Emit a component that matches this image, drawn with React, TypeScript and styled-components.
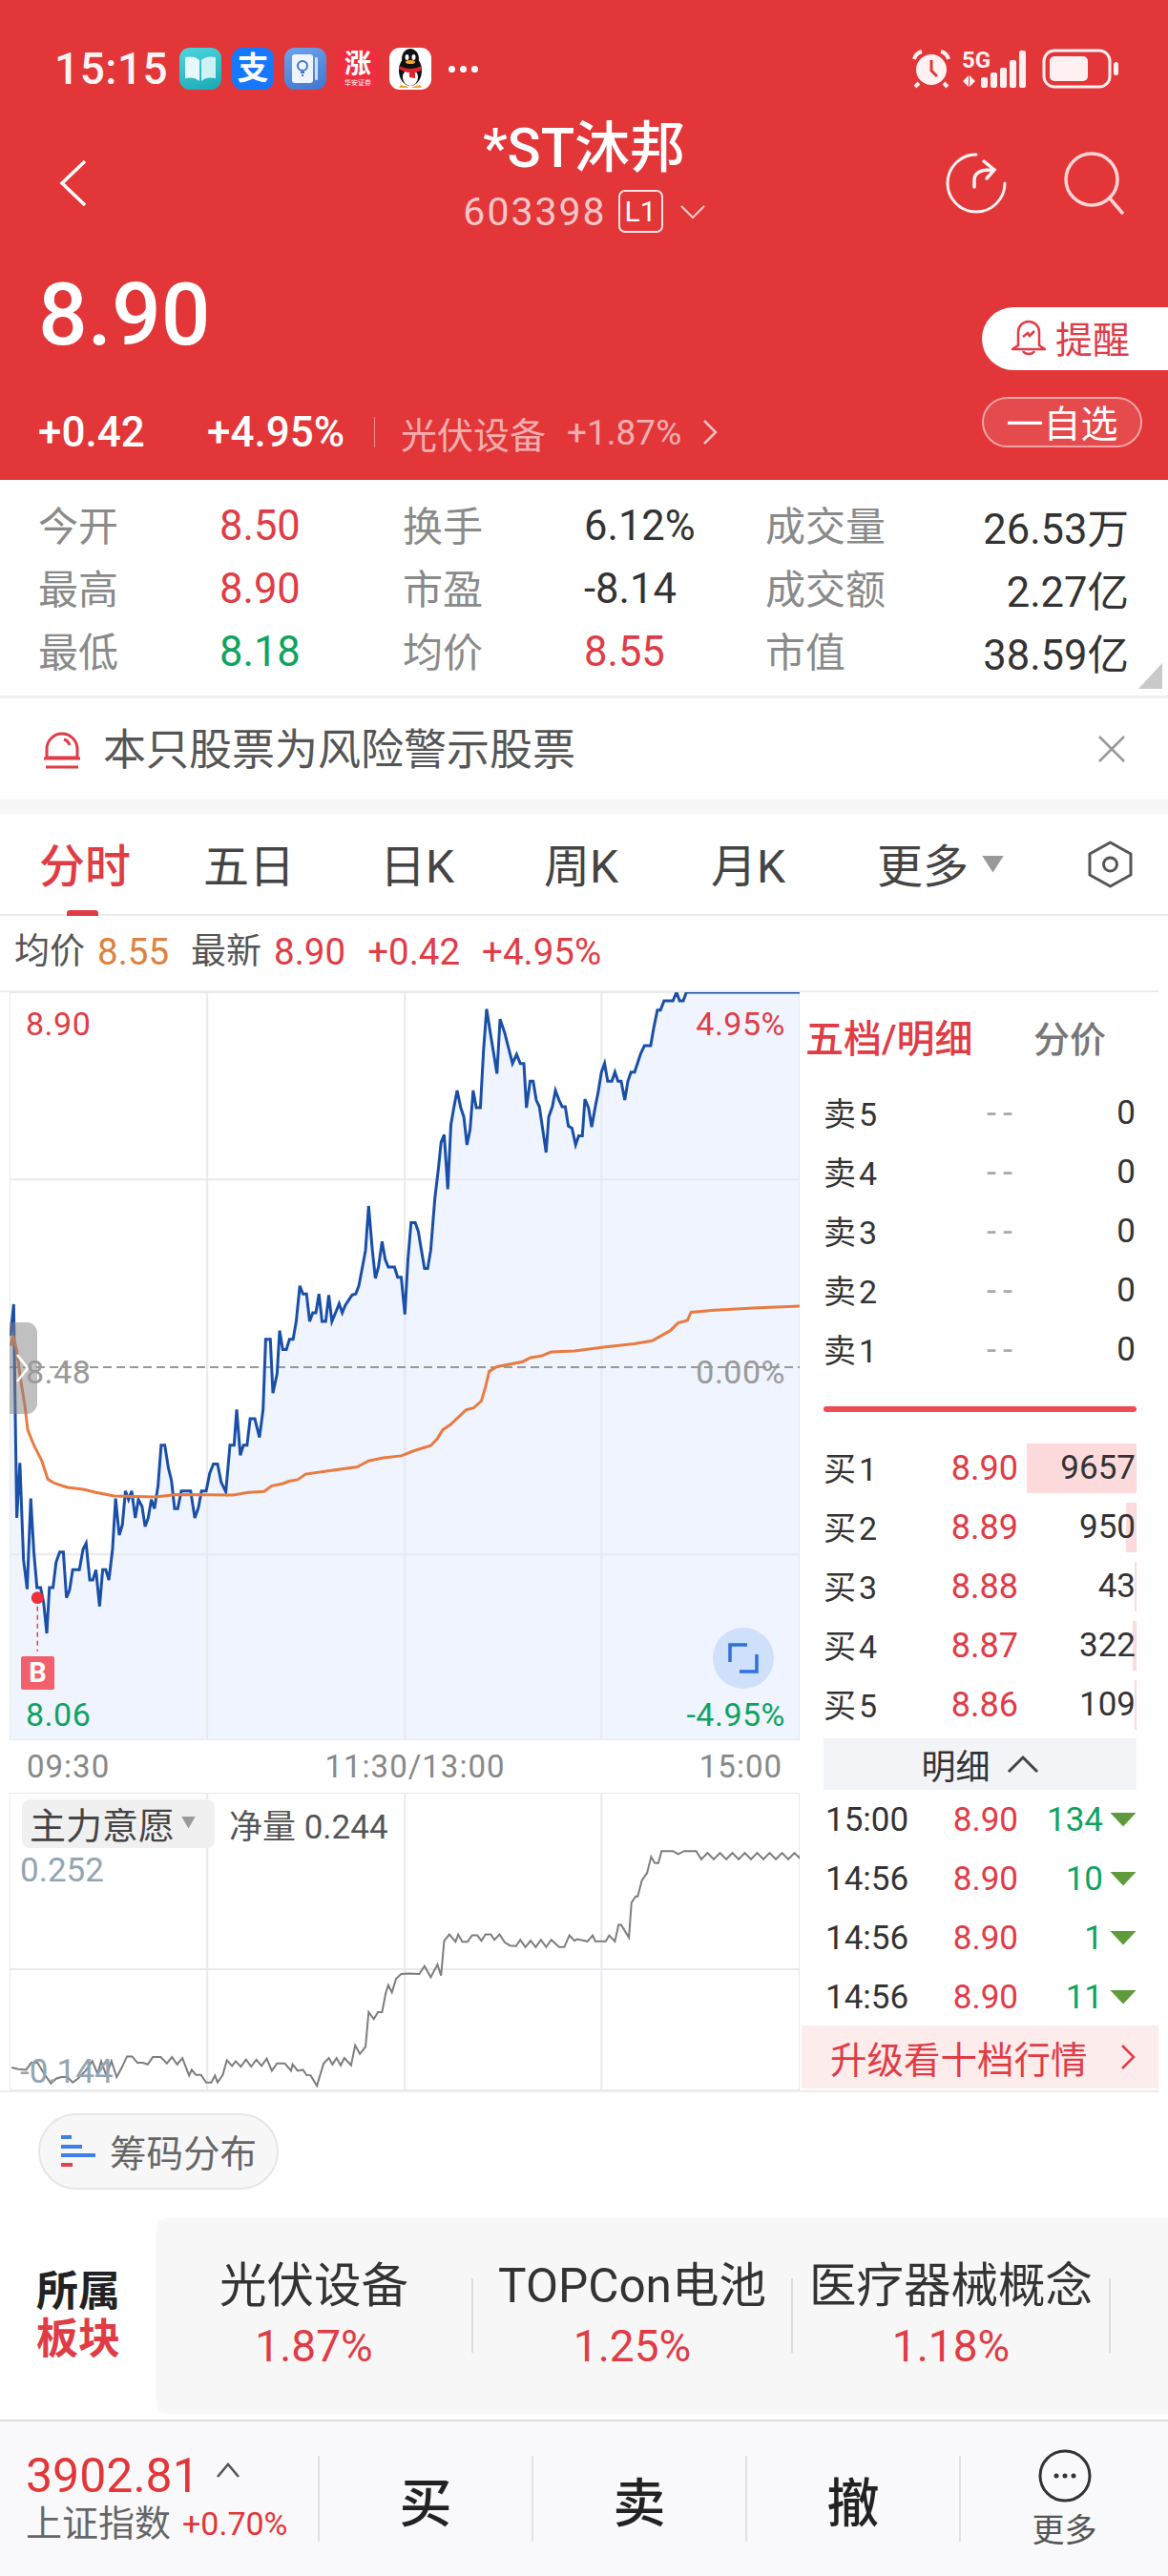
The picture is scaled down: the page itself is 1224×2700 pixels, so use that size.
import React from 'react'
import styled, { createGlobalStyle } from 'styled-components'

const RED = '#e23639'
const TEXT_RED = '#e03c46'
const GREEN = '#0ea35f'
const GRID = '#e9e9ee'

const GlobalStyle = createGlobalStyle`
    html, body { margin: 0; padding: 0; background: #fff; }
    * { box-sizing: border-box; }
    body { font-family: Roboto, "Noto Sans CJK SC", sans-serif; }
`

const Page = styled.div`
    width: 1224px;
    height: 2700px;
    overflow: hidden;
    background: #fff;
    color: #333;
`

const Header = styled.header`
    height: 503px;
    background: ${RED};
    color: #fff;
`

const StatusBar = styled.div`
    height: 94px;
    padding: 50px 50px 0 57px;
    display: flex;
    align-items: center;
`

const Clock = styled.span`
    font-size: 46px;
    font-weight: 500;
    letter-spacing: 0.5px;
    line-height: 44px;
    width: 131px;
    flex: none;
    color: #fff3f3;
`

const AppIcons = styled.div`
    display: flex;
    gap: 11px;
`

const AppTile = styled.div<{ $bg: string }>`
    width: 44px;
    height: 44px;
    border-radius: 11px;
    background: ${p => p.$bg};
    display: flex;
    flex-direction: column;
    align-items: center;
    justify-content: center;
    overflow: hidden;
    color: #fff;
`

const PayGlyph = styled.span`
    font-size: 33px;
    line-height: 36px;
    font-weight: 700;
`

const RiseGlyph = styled.span`
    font-size: 28px;
    line-height: 30px;
    font-weight: 700;
`

const RiseCaption = styled.span`
    font-size: 7px;
    line-height: 8px;
`

const MoreDots = styled.span`
    display: flex;
    gap: 5px;
    margin-left: 18px;

    i {
        width: 7px;
        height: 7px;
        border-radius: 50%;
        background: #fff;
    }
`

const StatusRight = styled.div`
    margin-left: auto;
    display: flex;
    align-items: center;
`

const NavRow = styled.div`
    margin-top: 34px;
    height: 116px;
    padding: 0 62px;
    display: grid;
    grid-template-columns: 1fr auto 1fr;
`

const BackCell = styled.div`
    display: flex;
    align-items: center;
    padding-top: 12px;
`

const TitleBlock = styled.div`
    display: flex;
    flex-direction: column;
    align-items: center;
`

const Title = styled.div`
    font-size: 58px;
    line-height: 54px;
    font-weight: 500;
`

const CodeRow = styled.div`
    margin-top: 17px;
    height: 45px;
    display: flex;
    align-items: center;
    color: rgba(255, 255, 255, 0.72);
    font-size: 41px;
    letter-spacing: 2px;
`

const LevelBadge = styled.span`
    margin-left: 12px;
    width: 47px;
    height: 45px;
    border: 2px solid rgba(255, 255, 255, 0.85);
    border-radius: 7px;
    font-size: 30px;
    letter-spacing: 0;
    color: #fff;
    display: flex;
    align-items: center;
    justify-content: center;
`

const NavActions = styled.div`
    display: flex;
    justify-content: flex-end;
    align-items: center;
    gap: 60px;
    padding-top: 12px;
    margin-right: -17px;
`

const Quote = styled.div`
    height: 259px;
    display: flex;
    justify-content: space-between;
`

const QuoteLeft = styled.div`
    padding-left: 40px;
`

const Price = styled.div`
    margin-top: 38px;
    font-size: 91px;
    line-height: 96px;
    font-weight: 500;
`

const ChangeRow = styled.div`
    margin-top: 55px;
    height: 40px;
    display: flex;
    align-items: center;
    font-size: 44px;
    white-space: nowrap;
`

const ChangeValue = styled.span<{ $width: number }>`
    width: ${p => p.$width}px;
    font-weight: 500;
`

const SectorLink = styled.span`
    border-left: 1px solid rgba(255, 255, 255, 0.45);
    height: 32px;
    padding-left: 27px;
    display: flex;
    align-items: center;
    gap: 22px;
    color: rgba(255, 255, 255, 0.62);
    font-size: 38px;
`

const SectorPct = styled.span`
    font-size: 37px;
`

const QuoteRight = styled.div`
    display: flex;
    flex-direction: column;
    align-items: flex-end;
`

const RemindButton = styled.div`
    margin-top: 78px;
    width: 195px;
    height: 66px;
    border-radius: 33px 0 0 33px;
    background: #fff;
    color: ${TEXT_RED};
    font-size: 39px;
    display: flex;
    align-items: center;
    padding: 0 0 4px 30px;
    gap: 9px;
`

const WatchButton = styled.div`
    margin-top: 28px;
    margin-right: 27px;
    width: 168px;
    height: 53px;
    border-radius: 27px;
    border: 2px solid rgba(255, 255, 255, 0.5);
    background: rgba(255, 255, 255, 0.1);
    font-size: 39px;
    padding-bottom: 3px;
    display: flex;
    align-items: center;
    justify-content: center;
`

const Stats = styled.section`
    position: relative;
    height: 229px;
    padding: 15px 40px 0;
    border-bottom: 3px solid #f0f0f0;
    display: grid;
    grid-template-columns: 190px 192px 190px 190px 200px 181px;
    grid-auto-rows: 66px;
    align-items: center;
    font-size: 43.5px;
`

const StatLabel = styled.span`
    color: #8a8a8a;
    font-size: 42px;
    margin-top: -5px;
`

const StatValue = styled.span<{ $color?: string; $end?: boolean }>`
    color: ${p => p.$color || '#333'};
    justify-self: ${p => (p.$end ? 'end' : 'start')};
    white-space: nowrap;
`

const CornerMark = styled.i`
    position: absolute;
    right: 6px;
    bottom: 7px;
    width: 25px;
    height: 27px;
    background: #c9c9c9;
    clip-path: polygon(100% 0, 100% 100%, 0 100%);
`

const WarningBar = styled.section`
    height: 106px;
    padding: 0 44px 0 45px;
    display: flex;
    align-items: center;
    color: #555;
    font-size: 45px;
`

const WarningText = styled.span`
    margin: -6px 0 0 23px;
    flex: 1;
`

const SectionGap = styled.div`
    height: 15px;
    background: #f6f6f6;
`

const Tabs = styled.nav`
    height: 107px;
    padding: 0 37px 4px 41px;
    border-bottom: 2px solid #ececec;
    display: flex;
    align-items: center;
    position: relative;
    font-size: 48px;
    color: #444;
`

const Tab = styled.span<{ $active?: boolean; $width: number }>`
    width: ${p => p.$width}px;
    color: ${p => (p.$active ? TEXT_RED : '#444')};
    font-weight: ${p => (p.$active ? 500 : 400)};
    flex: none;
`

const ActiveMark = styled.i`
    position: absolute;
    left: 70px;
    bottom: -2px;
    width: 33px;
    height: 6px;
    border-radius: 3px 3px 0 0;
    background: ${TEXT_RED};
`

const MoreArrow = styled.i`
    width: 23px;
    height: 18px;
    margin: 4px 0 0 14px;
    background: #999;
    clip-path: polygon(0 0, 100% 0, 50% 100%);
`

const TabSettings = styled.span`
    margin: 4px 0 0 auto;
    display: flex;
`

const SummaryLine = styled.div`
    height: 78px;
    padding: 0 0 2px 15px;
    display: flex;
    align-items: center;
    gap: 23px;
    font-size: 38.5px;
    line-height: 44px;
`

const SummaryGroup = styled.span`
    display: flex;
    align-items: center;
    gap: 13px;
    color: #555;
    font-size: 37px;
`

const SummaryValue = styled.span<{ $color: string }>`
    color: ${p => p.$color};
    font-size: 38.5px;
`

const Main = styled.section`
    width: 1214px;
    height: 1155px;
    border-top: 2px solid #ececec;
    border-bottom: 2px solid #ececec;
    display: grid;
    grid-template-columns: 840px 374px;
`

const ChartColumn = styled.div`
    padding-left: 10px;
`

const PriceChart = styled.div`
    position: relative;
    width: 828px;
    height: 784px;

    > svg {
        display: block;
        width: 100%;
        height: 100%;
    }
`

const ChartLabel = styled.span<{ $top: number; $right?: boolean; $color: string }>`
    position: absolute;
    top: ${p => p.$top}px;
    ${p => (p.$right ? 'right: 15px;' : 'left: 17px;')}
    color: ${p => p.$color};
    font-size: 34px;
    line-height: 40px;
    letter-spacing: 0.5px;
`

const SlideHandle = styled.div`
    position: absolute;
    left: 0;
    top: 346px;
    width: 29px;
    height: 96px;
    border-radius: 0 11px 11px 0;
    background: rgba(130, 130, 130, 0.5);
    display: flex;
    align-items: center;
`

const TradeBadge = styled.span`
    position: absolute;
    left: 12px;
    top: 696px;
    width: 35px;
    height: 35px;
    background: #f2606b;
    border-radius: 2px;
    color: #fff;
    font-size: 29px;
    font-weight: 700;
    text-align: center;
    line-height: 35px;
`

const ExpandButton = styled.span`
    position: absolute;
    left: 737px;
    top: 666px;
    width: 64px;
    height: 64px;
    border-radius: 50%;
    background: #cfe0fa;
    display: flex;
    align-items: center;
    justify-content: center;
`

const TimeAxis = styled.div`
    height: 55px;
    padding: 0 18px;
    display: flex;
    justify-content: space-between;
    align-items: center;
    width: 828px;
    color: #888;
    font-size: 33px;
    letter-spacing: 1px;
`

const TimeMiddle = styled.span`
    margin-left: 22px;
`

const SubChart = styled.div`
    position: relative;
    width: 828px;
    height: 312px;

    > svg {
        display: block;
        width: 100%;
        height: 100%;
    }
`

const SubHeader = styled.div`
    position: absolute;
    left: 13px;
    top: 7px;
    display: flex;
    align-items: center;
    gap: 15px;
    color: #555;
    font-size: 35px;
`

const IndicatorPicker = styled.span`
    width: 202px;
    height: 51px;
    padding: 0 0 3px 8px;
    background: #f0f0f0;
    border-radius: 8px;
    display: flex;
    align-items: center;
    gap: 7px;
    font-size: 38px;
    color: #444;
    white-space: nowrap;
`

const PickerArrow = styled.i`
    width: 15px;
    height: 13px;
    background: #999;
    clip-path: polygon(0 0, 100% 0, 50% 100%);
`

const SubLabel = styled.span<{ $top: number }>`
    position: absolute;
    left: 11px;
    top: ${p => p.$top}px;
    color: #92a5b3;
    font-size: 35px;
    line-height: 40px;
`

const BookColumn = styled.aside`
    display: flex;
    flex-direction: column;
`

const BookTabs = styled.div`
    height: 96px;
    padding: 0 0 4px 4px;
    display: flex;
    align-items: center;
    font-size: 40px;
    font-weight: 500;
`

const BookTabActive = styled.span`
    color: ${TEXT_RED};
    width: 239px;
`

const BookTabIdle = styled.span`
    color: #777;
    font-size: 38px;
`

const BookRow = styled.div`
    height: 62px;
    margin: 0 23px 0 23px;
    display: grid;
    grid-template-columns: 132px 73px 1fr;
    align-items: center;
    font-size: 35px;
`

const SideLabel = styled.span`
    letter-spacing: 3px;
    color: #333;
    white-space: nowrap;
    font-size: 34px;
    margin-top: -3px;
`

const BookPrice = styled.span<{ $idle?: boolean }>`
    color: ${p => (p.$idle ? '#aaa' : TEXT_RED)};
    text-align: right;
    font-size: 36px;
    padding-right: ${p => (p.$idle ? 0 : 1)}px;
    letter-spacing: ${p => (p.$idle ? 7 : 0)}px;
`

const QtyCell = styled.span`
    position: relative;
    height: 52px;
    line-height: 52px;
    text-align: right;
    padding-right: 1px;
`

const QtyBar = styled.i`
    position: absolute;
    right: 0;
    top: 0;
    height: 100%;
    background: #fddadc;
`

const QtyText = styled.span`
    position: relative;
`

const BookDivider = styled.div`
    height: 62px;
    margin: 0 23px;
    display: flex;
    align-items: center;

    &::before {
        content: '';
        width: 100%;
        height: 6px;
        border-radius: 3px;
        background: #ee4b52;
    }
`

const DetailHeader = styled.div`
    margin: 4px 23px 0;
    height: 54px;
    background: #f3f4f8;
    display: flex;
    align-items: center;
    justify-content: center;
    gap: 17px;
    font-size: 36px;
    color: #333;
`

const TradeRow = styled.div`
    height: 62px;
    margin: 0 23px 0 25px;
    display: grid;
    grid-template-columns: 132px 70px 1fr 28px;
    align-items: center;
    font-size: 35px;
`

const TradePrice = styled.span`
    color: ${TEXT_RED};
    text-align: right;
`

const TradeQty = styled.span`
    color: ${GREEN};
    text-align: right;
    padding-right: 7px;
`

const TradeArrow = styled.i`
    width: 28px;
    height: 15px;
    background: #5d9b3b;
    clip-path: polygon(0 0, 100% 0, 50% 100%);
`

const UpgradeBar = styled.div`
    height: 66px;
    margin-top: -1px;
    padding: 0 23px 0 30px;
    background: #fdecec;
    color: ${TEXT_RED};
    font-size: 38.5px;
    display: flex;
    align-items: center;
    justify-content: space-between;
`

const ChipRow = styled.div`
    padding: 22px 0 30px 40px;
`

const Chip = styled.div`
    width: 252px;
    height: 80px;
    border: 2px solid #e6e6e6;
    border-radius: 40px;
    background: #f7f7f7;
    color: #666;
    font-size: 38.5px;
    display: flex;
    align-items: center;
    gap: 15px;
    padding: 0 0 3px 21px;
`

const SectorRow = styled.section`
    height: 205px;
    display: flex;
`

const SectorHeading = styled.div`
    width: 164px;
    padding: 52px 0 0 38px;
    font-size: 44px;
    line-height: 50px;
    font-weight: 700;
    color: #222;
`

const SectorHeadingAccent = styled.div`
    color: ${TEXT_RED};
`

const SectorPanel = styled.div`
    flex: 1;
    background: #f7f7f8;
    border-radius: 12px 0 0 12px;
    padding-top: 44px;
    display: grid;
    grid-template-columns: 332px 335px 333px;
    grid-auto-rows: 92px;
`

const SectorCell = styled.div`
    border-right: 2px solid #ddd;
    height: 78px;
    margin-top: 19px;
    display: flex;
    flex-direction: column;
    align-items: center;
    justify-content: center;
    white-space: nowrap;
`

const SectorName = styled.div`
    flex: none;
    font-size: 49.5px;
    line-height: 48px;
    color: #333;
`

const SectorGain = styled.div`
    flex: none;
    font-size: 46px;
    line-height: 46px;
    margin-top: 16px;
    color: ${TEXT_RED};
`

const BottomBar = styled.footer`
    margin-top: 6px;
    height: 164px;
    border-top: 2px solid #ddd;
    background: #f9f9fb;
    padding-top: 36px;
    display: grid;
    grid-template-columns: 333px 224px 224px 224px 219px;
    grid-auto-rows: 90px;
`

const IndexCell = styled.div`
    padding-left: 27px;
    margin-top: -4px;
`

const IndexValue = styled.div`
    display: flex;
    align-items: flex-start;
    gap: 17px;
    font-size: 50px;
    line-height: 50px;
    color: ${RED};
`

const IndexMeta = styled.div`
    margin-top: 2px;
    display: flex;
    align-items: center;
    gap: 12px;
    font-size: 38px;
    line-height: 46px;
    color: #666;
    white-space: nowrap;
`

const IndexGain = styled.span`
    font-size: 34px;
    color: ${RED};
`

const ActionCell = styled.div`
    border-left: 2px solid #e2e2e2;
    display: flex;
    flex-direction: column;
    align-items: center;
    justify-content: center;
    font-size: 55px;
    font-weight: 500;
    color: #222;

    svg {
        flex: none;
    }
`

const MoreCaption = styled.span`
    margin-top: 10px;
    flex: none;
    font-size: 34px;
    line-height: 38px;
    font-weight: 400;
    color: #555;
`

const bluePoints = '20,690 26,628 32,1048 38,940 45,1130 52,1188 59,1010 65,1115 71,1185 78,1185 84,1215 90,1275 95,1185 102,1185 108,1135 115,1115 122,1115 128,1205 134,1190 140,1150 153,1150 160,1110 166,1098 173,1170 179,1170 185,1150 192,1222 198,1150 204,1150 210,1170 217,1110 223,1010 230,1082 236,1062 242,995 248,1012 254,995 261,1048 267,1012 274,1025 280,1065 286,1048 292,1012 298,1030 305,985 311,905 318,905 325,950 331,975 337,1030 343,1030 350,995 368,995 376,1048 383,1028 389,995 398,995 405,960 412,942 420,942 427,978 436,997 444,905 452,905 457,835 464,925 470,905 477,905 483,853 492,853 501,890 508,835 513,697 522,697 527,803 535,765 540,680 546,717 553,717 559,697 566,697 572,662 579,592 585,608 592,608 598,662 604,645 610,645 616,608 622,662 629,662 635,610 641,662 648,645 655,627 661,645 667,630 680,610 687,608 693,592 700,555 706,522 712,435 719,520 725,577 731,555 738,505 744,540 750,555 762,555 768,575 775,575 782,648 788,540 794,468 802,468 808,485 814,522 820,558 826,558 832,522 840,420 847,360 852,310 858,295 865,402 871,275 877,240 883,208 890,242 896,260 902,315 908,285 914,208 920,242 928,242 934,130 940,48 948,100 960,175 966,68 975,95 990,155 998,137 1005,155 1012,155 1017,242 1024,190 1030,190 1036,227 1042,240 1055,330 1060,260 1067,240 1073,208 1080,227 1086,240 1092,240 1098,278 1105,282 1112,315 1118,297 1125,297 1130,225 1137,242 1143,280 1150,240 1155,215 1162,172 1168,155 1174,190 1182,190 1188,172 1194,190 1200,190 1207,227 1213,190 1219,172 1226,172 1238,135 1245,120 1257,120 1263,85 1270,50 1276,50 1283,32 1300,32 1307,15 1313,32 1320,32 1326,15 1545,15'

const orangePoints = '20,710 25,690 32,720 40,780 48,830 53,875 65,905 80,935 92,972 105,980 130,988 160,992 185,998 220,1005 300,1007 340,1002 450,1003 480,998 510,996 525,985 545,981 558,976 575,973 590,962 640,955 690,948 712,936 740,930 775,926 800,916 832,906 845,892 855,875 870,865 900,836 915,832 930,818 938,790 945,760 960,751 1010,741 1025,733 1045,730 1065,722 1110,720 1170,712 1225,706 1260,700 1295,680 1310,665 1328,660 1335,644 1380,640 1465,635 1545,632'

// tail of the indicator line just flickers between two levels
const subTail = Array.from({ length: 17 }, (_, i) => `${1355 + i * 12},${i % 2 ? 248 : 268}`).join(' ')

const subPoints = `22,925 35,930 50,932 60,910 72,910 85,945 98,975 108,960 118,955 130,955 140,972 150,960 165,935 178,905 188,945 195,905 205,950 215,905 225,955 235,925 245,890 255,890 265,910 275,910 285,915 295,892 310,892 322,912 332,892 342,915 352,895 365,950 370,932 378,948 388,948 398,972 408,972 415,950 420,972 430,948 438,902 448,920 455,905 465,922 475,900 485,922 495,900 505,920 515,897 525,935 535,912 550,912 562,935 565,915 575,935 585,932 592,948 600,950 612,983 625,912 635,895 642,915 650,895 658,918 665,895 678,918 686,855 695,882 706,860 712,750 722,772 730,750 738,750 745,690 750,665 757,688 765,645 775,630 790,628 810,630 820,605 832,640 845,600 852,635 858,525 868,505 880,528 885,505 893,528 903,528 912,508 922,508 930,525 938,505 948,505 955,522 965,505 975,530 985,540 997,542 1005,522 1015,545 1025,525 1035,545 1045,522 1055,545 1065,522 1080,545 1090,545 1100,508 1110,525 1115,520 1135,527 1145,508 1150,527 1170,527 1177,508 1188,527 1195,475 1200,475 1215,515 1220,405 1228,385 1232,385 1240,335 1250,312 1258,260 1265,280 1272,280 1278,242 1300,242 1310,252 1322,242 1345,242 ${subTail} 1545,255`

const stats = [
    ['今开', '8.50', TEXT_RED, '换手', '6.12%', '', '成交量', '26.53万'],
    ['最高', '8.90', TEXT_RED, '市盈', '-8.14', '', '成交额', '2.27亿'],
    ['最低', '8.18', GREEN, '均价', '8.55', TEXT_RED, '市值', '38.59亿'],
]

const asks = ['卖5', '卖4', '卖3', '卖2', '卖1']

const bids = [
    { label: '买1', price: '8.90', qty: '9657', bar: 115 },
    { label: '买2', price: '8.89', qty: '950', bar: 11 },
    { label: '买3', price: '8.88', qty: '43', bar: 2 },
    { label: '买4', price: '8.87', qty: '322', bar: 4 },
    { label: '买5', price: '8.86', qty: '109', bar: 2 },
]

const trades = [
    ['15:00', '8.90', '134'],
    ['14:56', '8.90', '10'],
    ['14:56', '8.90', '1'],
    ['14:56', '8.90', '11'],
]

const sectors = [
    ['光伏设备', '1.87%'],
    ['TOPCon电池', '1.25%'],
    ['医疗器械概念', '1.18%'],
]

const ChartLines = ({ top, bottom, hLines }: { top: number; bottom: number; hLines: number[] }) => (
    <>
        <rect x="18" y={top} width="1527" height={bottom - top} fill="none" stroke={GRID} strokeWidth="2" vectorEffect="non-scaling-stroke" />
        {[400, 782, 1162].map(x => (
            <line key={x} x1={x} x2={x} y1={top} y2={bottom} stroke={GRID} strokeWidth="2" vectorEffect="non-scaling-stroke" />
        ))}
        {hLines.map(y => (
            <line key={y} x1="18" x2="1545" y1={y} y2={y} stroke={GRID} strokeWidth="2" vectorEffect="non-scaling-stroke" />
        ))}
    </>
)

const App = () => {
    return (
        <Page>
            <GlobalStyle />
            <Header>
                <StatusBar>
                    <Clock>15:15</Clock>
                    <AppIcons>
                        <AppTile $bg="linear-gradient(160deg,#4fd6e0,#18a9b4)">
                            <svg width="34" height="30" viewBox="0 0 34 30">
                                <path d="M16 6C12 2 6 2 1 3v22c5-1 11-1 15 3z" fill="#e8f9fb" />
                                <path d="M18 6c4-4 10-4 15-3v22c-5-1-11-1-15 3z" fill="#cdf1f5" />
                            </svg>
                        </AppTile>
                        <AppTile $bg="#1677ff"><PayGlyph>支</PayGlyph></AppTile>
                        <AppTile $bg="linear-gradient(160deg,#6ea3ea,#3f76cf)">
                            <svg width="30" height="32" viewBox="0 0 30 32">
                                <rect x="1" y="1" width="22" height="30" rx="3" fill="#eef4fd" />
                                <rect x="25" y="4" width="3" height="24" rx="1" fill="#cfe0f8" />
                                <circle cx="12" cy="13" r="5" fill="none" stroke="#3f76cf" strokeWidth="2" />
                                <path d="M10 20h4M11 23h2" stroke="#3f76cf" strokeWidth="2" />
                            </svg>
                        </AppTile>
                        <AppTile $bg="#ee2e3f">
                            <RiseGlyph>涨</RiseGlyph>
                            <RiseCaption>华安证券</RiseCaption>
                        </AppTile>
                        <AppTile $bg="#fff">
                            <svg width="36" height="42" viewBox="0 0 36 42">
                                <ellipse cx="18" cy="23" rx="12" ry="16" fill="#111" />
                                <ellipse cx="18" cy="10" rx="9" ry="10" fill="#111" />
                                <ellipse cx="18" cy="30" rx="8" ry="9" fill="#fff" />
                                <ellipse cx="14.500" cy="9" rx="2" ry="3" fill="#fff" />
                                <ellipse cx="21.500" cy="9" rx="2" ry="3" fill="#fff" />
                                <ellipse cx="18" cy="14" rx="5" ry="2" fill="#f5a623" />
                                <path d="M6 18c8 4 16 4 24 0v4c-3 2-5 2-7 3v6l-6-1v-5c-4 0-8-2-11-4z" fill="#e0232e" />
                                <path d="M8 38l8 2v1H6zM28 38l-8 2v1h10z" fill="#f5a623" />
                            </svg>
                        </AppTile>
                    </AppIcons>
                    <MoreDots><i /><i /><i /></MoreDots>
                    <StatusRight>
                        <svg width="42" height="42" viewBox="0 0 42 42">
                            <circle cx="21" cy="22" r="16" fill="#fff1f1" />
                            <path d="M21 12v11l6 6" fill="none" stroke={RED} strokeWidth="3" />
                            <path d="M3 11c1-4 4-7 8-8M39 11c-1-4-4-7-8-8M8 36l-4 4M34 36l4 4" fill="none" stroke="#fff1f1" strokeWidth="4" />
                        </svg>
                        <svg width="82" height="44" viewBox="0 0 82 44" style={{ marginLeft: 11 }}>
                            <path d="M1 35l6-6v12zM8 29l6 6-6 6z" fill="#fff1f1" />
                            {[[20, 31], [30, 26], [40, 21], [50, 13], [60, 3]].map(([x, y]) => (
                                <rect key={x} x={x} y={y} width="7" height={42 - y} rx="2" fill="#fff1f1" />
                            ))}
                            <text x="0" y="21" fontFamily="Roboto" fontSize="24" fontWeight="700" fill="#fff1f1">5G</text>
                        </svg>
                        <svg width="82" height="42" viewBox="0 0 82 42" style={{ marginLeft: 2 }}>
                            <rect x="2" y="2" width="69" height="38" rx="11" fill="none" stroke="#fff1f1" strokeWidth="3" />
                            <rect x="8" y="8" width="40" height="26" rx="5" fill="#fff1f1" />
                            <rect x="75" y="14" width="5" height="14" rx="2.500" fill="#fff1f1" />
                        </svg>
                    </StatusRight>
                </StatusBar>

                <NavRow>
                    <BackCell>
                        <svg width="30" height="50" viewBox="0 0 30 50">
                            <path d="M27 2L3 25l24 23" fill="none" stroke="#fff" strokeWidth="3.500" />
                        </svg>
                    </BackCell>
                    <TitleBlock>
                        <Title>*ST沐邦</Title>
                        <CodeRow>
                            603398
                            <LevelBadge>L1</LevelBadge>
                            <svg width="26" height="16" viewBox="0 0 26 16" style={{ marginLeft: 18 }}>
                                <path d="M1 2l12 12L25 2" fill="none" stroke="rgba(255,255,255,.75)" strokeWidth="2" />
                            </svg>
                        </CodeRow>
                    </TitleBlock>
                    <NavActions>
                        <svg width="64" height="64" viewBox="0 0 64 64">
                            <path d="M32 2A30 30 0 1 0 62 32" fill="none" stroke="#fff2f2" strokeWidth="3" strokeLinecap="round" />
                            <path d="M30 36V29c0-7 5-11 17-11M40 9l11 9-8 9" fill="none" stroke="#fff2f2" strokeWidth="3.500" strokeLinecap="round" />
                        </svg>
                        <svg width="64" height="66" viewBox="0 0 64 66">
                            <circle cx="29" cy="29" r="27" fill="none" stroke="#ffd6d6" strokeWidth="3.500" />
                            <path d="M49 50l12 14" stroke="#ffd6d6" strokeWidth="3.500" strokeLinecap="round" />
                        </svg>
                    </NavActions>
                </NavRow>

                <Quote>
                    <QuoteLeft>
                        <Price>8.90</Price>
                        <ChangeRow>
                            <ChangeValue $width={177}>+0.42</ChangeValue>
                            <ChangeValue $width={175}>+4.95%</ChangeValue>
                            <SectorLink>
                                光伏设备
                                <SectorPct>+1.87%</SectorPct>
                                <svg width="17" height="28" viewBox="0 0 17 28">
                                    <path d="M2 2l12 12L2 26" fill="none" stroke="rgba(255,255,255,.7)" strokeWidth="2.500" />
                                </svg>
                            </SectorLink>
                        </ChangeRow>
                    </QuoteLeft>
                    <QuoteRight>
                        <RemindButton>
                            <svg width="38" height="40" viewBox="0 0 38 40">
                                <path d="M8 29V15a11 11 0 0 1 22 0v14l6 4H2z" fill="none" stroke={TEXT_RED} strokeWidth="2.500" strokeLinejoin="round" />
                                <path d="M13 20l5-4 2 3 5-5M13 35c2 4 10 4 12 0" fill="none" stroke={TEXT_RED} strokeWidth="2.500" />
                            </svg>
                            提醒
                        </RemindButton>
                        <WatchButton>一自选</WatchButton>
                    </QuoteRight>
                </Quote>
            </Header>

            <Stats>
                {stats.map(row => (
                    <React.Fragment key={row[0]}>
                        <StatLabel>{row[0]}</StatLabel>
                        <StatValue $color={row[2]}>{row[1]}</StatValue>
                        <StatLabel>{row[3]}</StatLabel>
                        <StatValue $color={row[5]}>{row[4]}</StatValue>
                        <StatLabel>{row[6]}</StatLabel>
                        <StatValue $end>{row[7]}</StatValue>
                    </React.Fragment>
                ))}
                <CornerMark />
            </Stats>

            <WarningBar>
                <svg width="40" height="42" viewBox="0 0 40 42">
                    <path d="M4 30V21a16 16 0 0 1 32 0v9z" fill="none" stroke={TEXT_RED} strokeWidth="3" />
                    <path d="M1 31h38M3 40h34M22 11c3 1 5 3 6 6" fill="none" stroke={TEXT_RED} strokeWidth="3" />
                </svg>
                <WarningText>本只股票为风险警示股票</WarningText>
                <svg width="30" height="30" viewBox="0 0 30 30">
                    <path d="M2 2l26 26M28 2L2 28" stroke="#999" strokeWidth="2.500" />
                </svg>
            </WarningBar>
            <SectionGap />

            <Tabs>
                <Tab $active $width={172}>分时</Tab>
                <Tab $width={185}>五日</Tab>
                <Tab $width={172}>日K</Tab>
                <Tab $width={175}>周K</Tab>
                <Tab $width={174}>月K</Tab>
                <Tab $width={96}>更多</Tab>
                <MoreArrow />
                <TabSettings>
                    <svg width="47" height="50" viewBox="0 0 47 50">
                        <path d="M23.500 2L45 14v22L23.500 48 2 36V14z" fill="none" stroke="#555" strokeWidth="3" strokeLinejoin="round" />
                        <circle cx="23.500" cy="25" r="7" fill="none" stroke="#555" strokeWidth="3" />
                    </svg>
                </TabSettings>
                <ActiveMark />
            </Tabs>

            <SummaryLine>
                <SummaryGroup>均价 <SummaryValue $color="#dc8240">8.55</SummaryValue></SummaryGroup>
                <SummaryGroup>最新 <SummaryValue $color={TEXT_RED}>8.90</SummaryValue></SummaryGroup>
                <SummaryValue $color={TEXT_RED}>+0.42</SummaryValue>
                <SummaryValue $color={TEXT_RED}>+4.95%</SummaryValue>
            </SummaryLine>

            <Main>
                <ChartColumn>
                    <PriceChart>
                        <svg viewBox="18 15 1527 1470" preserveAspectRatio="none">
                            <polygon points={`${bluePoints} 1545,1485 20,1485`} fill="#eff4fe" />
                            <ChartLines top={15} bottom={1485} hLines={[383, 1120]} />
                            <line x1="18" x2="1545" y1="752" y2="752" stroke="#999" strokeWidth="2" strokeDasharray="9 5" vectorEffect="non-scaling-stroke" />
                            <polyline points={bluePoints} fill="none" stroke="#1a4fa8" strokeWidth="3" vectorEffect="non-scaling-stroke" />
                            <polyline points={orangePoints} fill="none" stroke="#ea7b40" strokeWidth="3" vectorEffect="non-scaling-stroke" />
                            <line x1="72" x2="72" y1="1205" y2="1310" stroke="#ee3d48" strokeWidth="1.500" strokeDasharray="5 4" vectorEffect="non-scaling-stroke" />
                            <ellipse cx="72" cy="1205" rx="12" ry="12" fill="#ee2f3c" />
                        </svg>
                        <SlideHandle>
                            <svg width="16" height="32" viewBox="0 0 16 32" style={{ marginLeft: 6 }}>
                                <path d="M2 2l11 14L2 30" fill="none" stroke="#fff" strokeWidth="2.500" />
                            </svg>
                        </SlideHandle>
                        <ChartLabel $top={13} $color={TEXT_RED}>8.90</ChartLabel>
                        <ChartLabel $top={13} $right $color={TEXT_RED}>4.95%</ChartLabel>
                        <ChartLabel $top={378} $color="#999">8.48</ChartLabel>
                        <ChartLabel $top={378} $right $color="#999">0.00%</ChartLabel>
                        <ChartLabel $top={737} $color={GREEN}>8.06</ChartLabel>
                        <ChartLabel $top={737} $right $color={GREEN}>-4.95%</ChartLabel>
                        <TradeBadge>B</TradeBadge>
                        <ExpandButton>
                            <svg width="32" height="32" viewBox="0 0 32 32">
                                <path d="M2 20V2h18M30 12v18H12" fill="none" stroke="#2f6fe0" strokeWidth="3.500" />
                            </svg>
                        </ExpandButton>
                    </PriceChart>

                    <TimeAxis>
                        <span>09:30</span>
                        <TimeMiddle>11:30/13:00</TimeMiddle>
                        <span>15:00</span>
                    </TimeAxis>

                    <SubChart>
                        <svg viewBox="18 58 1527 939" preserveAspectRatio="none">
                            <ChartLines top={58} bottom={997} hLines={[615]} />
                            <polyline points={subPoints} fill="none" stroke="#7d7d7d" strokeWidth="2" vectorEffect="non-scaling-stroke" />
                        </svg>
                        <SubHeader>
                            <IndicatorPicker>主力意愿<PickerArrow /></IndicatorPicker>
                            净量 0.244
                        </SubHeader>
                        <SubLabel $top={62}>0.252</SubLabel>
                        <SubLabel $top={273}>-0.144</SubLabel>
                    </SubChart>
                </ChartColumn>

                <BookColumn>
                    <BookTabs>
                        <BookTabActive>五档/明细</BookTabActive>
                        <BookTabIdle>分价</BookTabIdle>
                    </BookTabs>
                    {asks.map(label => (
                        <BookRow key={label}>
                            <SideLabel>{label}</SideLabel>
                            <BookPrice $idle>--</BookPrice>
                            <QtyCell>0</QtyCell>
                        </BookRow>
                    ))}
                    <BookDivider />
                    {bids.map(b => (
                        <BookRow key={b.label}>
                            <SideLabel>{b.label}</SideLabel>
                            <BookPrice>{b.price}</BookPrice>
                            <QtyCell>
                                <QtyBar style={{ width: b.bar }} />
                                <QtyText>{b.qty}</QtyText>
                            </QtyCell>
                        </BookRow>
                    ))}
                    <DetailHeader>
                        明细
                        <svg width="34" height="20" viewBox="0 0 34 20">
                            <path d="M2 18L17 3l15 15" fill="none" stroke="#444" strokeWidth="3" />
                        </svg>
                    </DetailHeader>
                    {trades.map((t, i) => (
                        <TradeRow key={i}>
                            <span>{t[0]}</span>
                            <TradePrice>{t[1]}</TradePrice>
                            <TradeQty>{t[2]}</TradeQty>
                            <TradeArrow />
                        </TradeRow>
                    ))}
                    <UpgradeBar>
                        升级看十档行情
                        <svg width="17" height="28" viewBox="0 0 17 28">
                            <path d="M2 2l12 12L2 26" fill="none" stroke={TEXT_RED} strokeWidth="2.500" />
                        </svg>
                    </UpgradeBar>
                </BookColumn>
            </Main>

            <ChipRow>
                <Chip>
                    <svg width="37" height="34" viewBox="0 0 37 34">
                        <path d="M1 3h11M1 13h22M1 22h36" stroke="#3d7fe6" strokeWidth="4" fill="none" />
                        <path d="M1 32h12" stroke="#e2404a" strokeWidth="4" fill="none" />
                    </svg>
                    筹码分布
                </Chip>
            </ChipRow>

            <SectorRow>
                <SectorHeading>
                    所属
                    <SectorHeadingAccent>板块</SectorHeadingAccent>
                </SectorHeading>
                <SectorPanel>
                    {sectors.map(s => (
                        <SectorCell key={s[0]}>
                            <SectorName>{s[0]}</SectorName>
                            <SectorGain>{s[1]}</SectorGain>
                        </SectorCell>
                    ))}
                </SectorPanel>
            </SectorRow>

            <BottomBar>
                <IndexCell>
                    <IndexValue>
                        3902.81
                        <svg width="26" height="18" viewBox="0 0 26 18" style={{ marginTop: 10 }}>
                            <path d="M2 16L13 3l11 13" fill="none" stroke="#555" strokeWidth="2.500" />
                        </svg>
                    </IndexValue>
                    <IndexMeta>上证指数<IndexGain>+0.70%</IndexGain></IndexMeta>
                </IndexCell>
                <ActionCell>买</ActionCell>
                <ActionCell>卖</ActionCell>
                <ActionCell>撤</ActionCell>
                <ActionCell>
                    <svg width="56" height="56" viewBox="0 0 56 56">
                        <circle cx="28" cy="28" r="26" fill="none" stroke="#333" strokeWidth="3" />
                        <circle cx="19" cy="28" r="2.500" fill="#333" />
                        <circle cx="28" cy="28" r="2.500" fill="#333" />
                        <circle cx="37" cy="28" r="2.500" fill="#333" />
                    </svg>
                    <MoreCaption>更多</MoreCaption>
                </ActionCell>
            </BottomBar>
        </Page>
    )
}

export default App
